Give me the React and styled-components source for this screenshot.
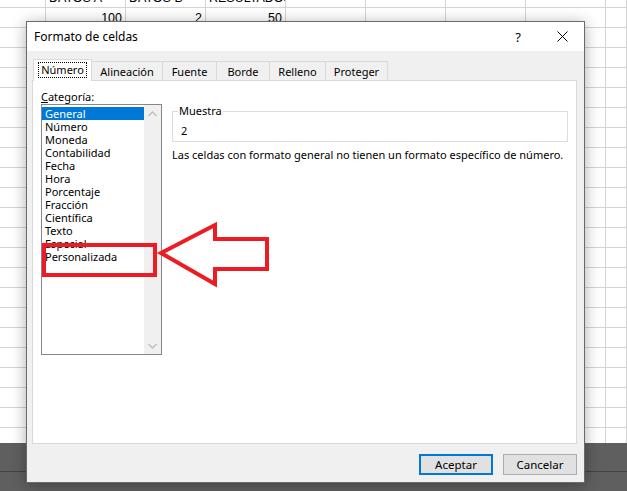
import React from "react";
import styled, { createGlobalStyle } from "styled-components";

const GlobalStyle = createGlobalStyle`
  html, body { margin: 0; padding: 0; background: #fff; overflow: hidden; }
  * { box-sizing: border-box; }
`;

const UI_FONT = `"Noto Sans", "Open Sans", sans-serif`;

const Page = styled.div`
  position: relative;
  width: 627px;
  height: 491px;
  overflow: hidden;
  display: flex;
  flex-direction: column;
  font-family: ${UI_FONT};
`;

const Sheet = styled.div`
  height: 443px;
  overflow: hidden;
  background: #fff;
`;

const SheetGrid = styled.div`
  margin-top: -12px;
  display: grid;
  grid-template-columns: 46px repeat(7, 80px) 21px;
  grid-auto-rows: 20px;
  font-family: "Liberation Sans", Arial, sans-serif;
  font-size: 12.5px;
  color: #000;
`;

const Cell = styled.div`
  border-right: 1px solid #d4d4d4;
  border-bottom: 1px solid #d4d4d4;
  display: flex;
  align-items: center;
  justify-content: ${(p) => (p.$num ? "flex-end" : "flex-start")};
  padding: 0 3px;
  white-space: nowrap;
  overflow: hidden;
`;

const StatusBar = styled.div`
  flex: 1;
  background: #5f5f5f;
`;

const StatusTop = styled.div`
  height: 29px;
  border-bottom: 1px solid #444;
`;

const Dialog = styled.div`
  position: absolute;
  left: 26px;
  top: 21px;
  width: 559px;
  height: 462px;
  border: 1px solid #6a6a6a;
  box-shadow: 0 2px 14px rgba(0, 0, 0, 0.32);
  display: flex;
  flex-direction: column;
  background: #f0f0f0;
  font-size: 11px;
  color: #000;
`;

const TitleBar = styled.div`
  height: 29px;
  background: #fff;
  display: flex;
  align-items: center;
  padding-left: 7px;
`;

const Title = styled.div`
  flex: 1;
  font-size: 12px;
`;

const TitleButton = styled.div`
  width: 44px;
  height: 29px;
  display: flex;
  align-items: center;
  justify-content: center;
  font-size: 13px;
`;

const Body = styled.div`
  flex: 1;
  display: flex;
  flex-direction: column;
  padding: 8px 7px 7px 5px;
`;

const TabRow = styled.div`
  display: flex;
  align-items: flex-end;
  height: 21px;
  padding-left: 1px;
  position: relative;
  z-index: 1;
`;

const Tab = styled.div`
  width: ${(p) => p.$w}px;
  height: ${(p) => (p.$active ? 22 : 20)}px;
  margin-bottom: -1px;
  margin-left: -1px;
  border: 1px solid #d9d9d9;
  border-bottom: ${(p) => (p.$active ? "none" : "1px solid #d9d9d9")};
  background: ${(p) => (p.$active ? "#fff" : "#f0f0f0")};
  display: flex;
  align-items: center;
  justify-content: center;
  padding-bottom: ${(p) => (p.$active ? 2 : 0)}px;
  &:first-child { margin-left: 0; }
`;

const FocusLabel = styled.span`
  outline: 1px dotted #000;
  outline-offset: 0;
  padding: 0 2px;
  line-height: 14px;
`;

const Panel = styled.div`
  flex: 1;
  background: #fff;
  border: 1px solid #d9d9d9;
  display: flex;
  padding: 8px 8px 0 8px;
`;

const LeftColumn = styled.div`
  width: 121px;
  display: flex;
  flex-direction: column;
`;

const FieldLabel = styled.div`
  line-height: 15px;
  height: 15px;
`;

const ListBox = styled.div`
  height: 251px;
  border: 1px solid #828790;
  display: flex;
`;

const Items = styled.div`
  flex: 1;
  padding-top: 2px;
`;

const Item = styled.div`
  height: 13px;
  line-height: 13px;
  padding-left: 3px;
  background: ${(p) => (p.$selected ? "#0078d7" : "transparent")};
  color: ${(p) => (p.$selected ? "#fff" : "#000")};
  white-space: nowrap;
`;

const ScrollBar = styled.div`
  width: 17px;
  background: #f0f0f0;
  display: flex;
  flex-direction: column;
  justify-content: space-between;
  align-items: center;
  padding: 6px 0 5px;
`;

const RightColumn = styled.div`
  flex: 1;
  margin-left: 10px;
  display: flex;
  flex-direction: column;
`;

const GroupBox = styled.fieldset`
  margin: 15px 0 0 0;
  padding: 0 8px;
  border: 1px solid #dcdcdc;
  min-width: 0;
`;

const Legend = styled.legend`
  padding: 0 1px;
  margin-left: -3px;
  line-height: 14px;
`;

const SampleValue = styled.div`
  line-height: 14px;
  padding: 6px 0 3px;
`;

const Description = styled.div`
  margin-top: 6px;
  line-height: 14px;
  white-space: nowrap;
`;

const Footer = styled.div`
  display: flex;
  justify-content: flex-end;
  gap: 10px;
  padding-top: 10px;
  padding-right: 0;
`;

const Button = styled.div`
  width: 74px;
  height: 21px;
  display: flex;
  align-items: center;
  justify-content: center;
  background: #e1e1e1;
  border: ${(p) => (p.$default ? "2px solid #0078d7" : "1px solid #adadad")};
  font-size: 11.5px;
`;

const Overlay = styled.svg`
  position: absolute;
  left: 0;
  top: 0;
  pointer-events: none;
`;

const Chevron = ({ up }) => (
  <svg width="9" height="6" viewBox="0 0 9 6">
    <path
      d={up ? "M0.5 5 L4.5 1 L8.5 5" : "M0.5 1 L4.5 5 L8.5 1"}
      fill="none"
      stroke="#bdbdbd"
      strokeWidth="1.3"
    />
  </svg>
);

const categories = [
  "General",
  "Número",
  "Moneda",
  "Contabilidad",
  "Fecha",
  "Hora",
  "Porcentaje",
  "Fracción",
  "Científica",
  "Texto",
  "Especial",
  "Personalizada",
];

const tabs = [
  { label: "Número", w: 59 },
  { label: "Alineación", w: 72 },
  { label: "Fuente", w: 55 },
  { label: "Borde", w: 54 },
  { label: "Relleno", w: 57 },
  { label: "Proteger", w: 63 },
];

const sheetRows = [
  ["", "DATOS A", "DATOS B", "RESULTADOS", "", "", "", "", ""],
  ["", "100", "2", "50", "", "", "", "", ""],
];

export default function App() {
  const rows = [];
  for (let r = 0; r < 24; r++) {
    const data = sheetRows[r] || [];
    for (let c = 0; c < 9; c++) {
      rows.push(
        <Cell key={`${r}-${c}`} $num={r === 1}>
          {data[c] || ""}
        </Cell>
      );
    }
  }

  return (
    <Page>
      <GlobalStyle />
      <Sheet>
        <SheetGrid>{rows}</SheetGrid>
      </Sheet>
      <StatusBar>
        <StatusTop />
      </StatusBar>

      <Dialog>
        <TitleBar>
          <Title>Formato de celdas</Title>
          <TitleButton>?</TitleButton>
          <TitleButton>
            <svg width="11" height="11" viewBox="0 0 11 11">
              <path d="M0.5 0.5 L10.5 10.5 M10.5 0.5 L0.5 10.5" stroke="#000" strokeWidth="1" />
            </svg>
          </TitleButton>
        </TitleBar>
        <Body>
          <TabRow>
            {tabs.map((t, i) => (
              <Tab key={t.label} $w={t.w} $active={i === 0}>
                {i === 0 ? <FocusLabel>{t.label}</FocusLabel> : t.label}
              </Tab>
            ))}
          </TabRow>
          <Panel>
            <LeftColumn>
              <FieldLabel>
                <u>C</u>ategoría:
              </FieldLabel>
              <ListBox>
                <Items>
                  {categories.map((c, i) => (
                    <Item key={c} $selected={i === 0}>
                      {c}
                    </Item>
                  ))}
                </Items>
                <ScrollBar>
                  <Chevron up />
                  <Chevron />
                </ScrollBar>
              </ListBox>
            </LeftColumn>
            <RightColumn>
              <GroupBox>
                <Legend>Muestra</Legend>
                <SampleValue>2</SampleValue>
              </GroupBox>
              <Description>
                Las celdas con formato general no tienen un formato específico de número.
              </Description>
            </RightColumn>
          </Panel>
          <Footer>
            <Button $default>Aceptar</Button>
            <Button>Cancelar</Button>
          </Footer>
        </Body>
      </Dialog>

      <Overlay width="627" height="491" viewBox="0 0 627 491">
        <rect x="44" y="245" width="111" height="30" fill="none" stroke="#ed1c24" strokeWidth="4" />
        <polygon
          points="161,253 215,225 215,239 267,239 267,269 215,269 215,284"
          fill="none"
          stroke="#ed1c24"
          strokeWidth="4"
          strokeLinejoin="miter"
        />
      </Overlay>
    </Page>
  );
}
